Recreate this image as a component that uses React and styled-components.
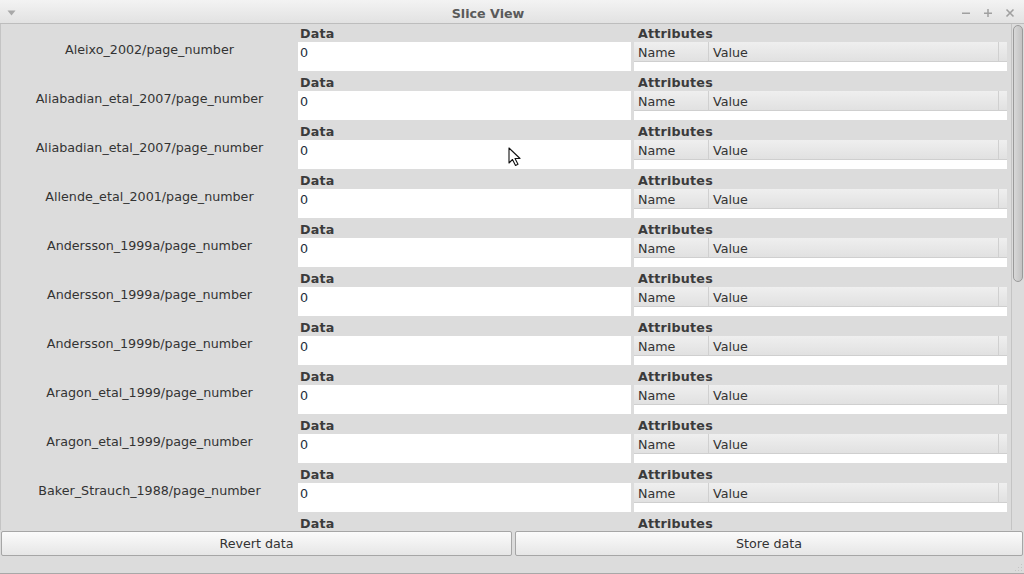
import React from "react";
import styled, { createGlobalStyle } from "styled-components";

// last entry is the row that is scrolled half out of view; its label sits below the fold
const rows = [
    "Aleixo_2002/page_number",
    "Aliabadian_etal_2007/page_number",
    "Aliabadian_etal_2007/page_number",
    "Allende_etal_2001/page_number",
    "Andersson_1999a/page_number",
    "Andersson_1999a/page_number",
    "Andersson_1999b/page_number",
    "Aragon_etal_1999/page_number",
    "Aragon_etal_1999/page_number",
    "Baker_Strauch_1988/page_number",
    "",
];

const GlobalStyle = createGlobalStyle`
    html, body {
        margin: 0;
        padding: 0;
        background: #dcdcdc;
    }
    body {
        font-family: "DejaVu Sans", "Liberation Sans", sans-serif;
        font-size: 12.7px;
        color: #333;
    }
`;

const App = () => {
    return (
        <>
            <GlobalStyle />
            <Window>
                <TitleBar>
                    <MenuArrow>
                        <svg width="9" height="6" viewBox="0 0 9 6">
                            <path d="M0.5 0.5 L8.5 0.5 L4.5 5.5 Z" fill="#a8a8a8" />
                        </svg>
                    </MenuArrow>
                    <Title>Slice View</Title>
                    <Controls>
                        <ControlButton>
                            <svg width="10" height="10" viewBox="0 0 10 10">
                                <rect x="1" y="4.5" width="8" height="1.5" fill="#a0a0a0" />
                            </svg>
                        </ControlButton>
                        <ControlButton>
                            <svg width="10" height="10" viewBox="0 0 10 10">
                                <rect x="1" y="4.5" width="8" height="1.5" fill="#a0a0a0" />
                                <rect x="4.25" y="1" width="1.5" height="8" fill="#a0a0a0" />
                            </svg>
                        </ControlButton>
                        <ControlButton>
                            <svg width="10" height="10" viewBox="0 0 10 10">
                                <path d="M1.5 1.5 L8.5 8.5 M8.5 1.5 L1.5 8.5" stroke="#a0a0a0" strokeWidth="1.6" />
                            </svg>
                        </ControlButton>
                    </Controls>
                </TitleBar>

                <Body>
                    <ScrollArea>
                        {rows.map((name, i) => (
                            <Row key={i}>
                                <RowLabel>{name}</RowLabel>
                                <DataColumn>
                                    <SectionLabel>Data</SectionLabel>
                                    <DataField>0</DataField>
                                </DataColumn>
                                <AttrColumn>
                                    <SectionLabel $indent={4}>Attributes</SectionLabel>
                                    <AttrHeader>
                                        <HeaderCell $width={75}>Name</HeaderCell>
                                        <HeaderCell $grow>Value</HeaderCell>
                                        <HeaderCell $width={8} />
                                    </AttrHeader>
                                    <AttrTable />
                                </AttrColumn>
                            </Row>
                        ))}
                    </ScrollArea>
                    <ScrollTrack>
                        <ScrollThumb />
                    </ScrollTrack>
                </Body>

                <ButtonBar>
                    <PushButton $width={511}>Revert data</PushButton>
                    <PushButton>Store data</PushButton>
                </ButtonBar>

                <StatusBar>
                    <SizeGrip>
                        <svg width="10" height="10" viewBox="0 0 10 10">
                            <g fill="#c4c4c4">
                                <rect x="8" y="2" width="1" height="1" />
                                <rect x="5" y="5" width="1" height="1" />
                                <rect x="8" y="5" width="1" height="1" />
                                <rect x="2" y="8" width="1" height="1" />
                                <rect x="5" y="8" width="1" height="1" />
                                <rect x="8" y="8" width="1" height="1" />
                            </g>
                        </svg>
                    </SizeGrip>
                </StatusBar>

                <Pointer width="14" height="20" viewBox="0 0 14 20">
                    <path
                        d="M1 1 L1 16 L4.5 12.5 L7.5 18.5 L10 17.3 L7 11.5 L12 11.5 Z"
                        fill="#fff"
                        stroke="#111"
                        strokeWidth="1.1"
                        strokeLinejoin="round"
                    />
                </Pointer>
            </Window>
        </>
    );
};

const Window = styled.div`
    position: relative;
    width: 1024px;
    height: 574px;
    display: flex;
    flex-direction: column;
    background: #dcdcdc;
    overflow: hidden;
`;

const TitleBar = styled.div`
    height: 24px;
    display: flex;
    align-items: center;
    padding-top: 3px;
    background: linear-gradient(to bottom, #f3f3f3, #e2e2e2);
    border-bottom: 1px solid #bdbdbd;
    box-sizing: border-box;
`;

const MenuArrow = styled.div`
    width: 22px;
    display: flex;
    justify-content: center;
    align-items: center;
`;

const Title = styled.div`
    flex: 1;
    text-align: center;
    font-weight: bold;
    color: #5a5a5a;
`;

const Controls = styled.div`
    width: 70px;
    display: flex;
    justify-content: flex-end;
    align-items: center;
    gap: 12px;
    padding-right: 9px;
    box-sizing: border-box;
`;

const ControlButton = styled.div`
    width: 10px;
    height: 10px;
    display: flex;
`;

const Body = styled.div`
    height: 506px;
    display: flex;
    border-left: 1px solid #c4c4c4;
    box-sizing: border-box;
`;

const ScrollArea = styled.div`
    width: 1010px;
    overflow: hidden;
    border-right: 1px solid #c4c4c4;
    padding-top: 1px;
`;

const Row = styled.div`
    height: 49px;
    display: flex;
`;

const RowLabel = styled.div`
    width: 297px;
    height: 49px;
    display: flex;
    align-items: center;
    justify-content: center;
    color: #333;
    padding-bottom: 1px;
    box-sizing: border-box;
`;

const DataColumn = styled.div`
    width: 333px;
    display: flex;
    flex-direction: column;
`;

const AttrColumn = styled.div`
    width: 373px;
    margin-left: 3px;
    display: flex;
    flex-direction: column;
`;

const SectionLabel = styled.div`
    height: 17px;
    line-height: 18px;
    font-weight: bold;
    color: #3b3b3b;
    padding-left: ${(p) => p.$indent || 2}px;
    letter-spacing: 0.2px;
`;

const DataField = styled.div`
    height: 29px;
    background: #fff;
    padding: 3px 2px 0;
    box-sizing: border-box;
    color: #1d2b3a;
    line-height: 15px;
`;

const AttrHeader = styled.div`
    height: 20px;
    display: flex;
    background: linear-gradient(to bottom, #efefef, #e1e1e1);
    border-bottom: 1px solid #cfcfcf;
    box-sizing: border-box;
`;

const HeaderCell = styled.div`
    width: ${(p) => (p.$width ? `${p.$width}px` : "auto")};
    flex: ${(p) => (p.$grow ? 1 : "none")};
    border-right: 1px solid #d0d0d0;
    padding-left: 4px;
    line-height: 21px;
    color: #333;
    box-sizing: border-box;
    &:last-child {
        border-right: none;
    }
`;

const AttrTable = styled.div`
    height: 9px;
    background: #fff;
`;

const ScrollTrack = styled.div`
    flex: 1;
    padding: 1px 1px 0 1px;
`;

const ScrollThumb = styled.div`
    height: 257px;
    border: 1px solid #9a9a9a;
    border-radius: 5px;
    background: linear-gradient(to right, #d8d8d8, #c2c2c2);
    box-sizing: border-box;
`;

const ButtonBar = styled.div`
    height: 27px;
    display: flex;
    gap: 3px;
    padding: 1px;
    box-sizing: border-box;
`;

const PushButton = styled.button`
    flex: ${(p) => (p.$width ? "none" : 1)};
    width: ${(p) => (p.$width ? `${p.$width}px` : "auto")};
    height: 25px;
    border: 1px solid #a6a6a6;
    border-radius: 2px;
    background: linear-gradient(to bottom, #fbfbfb, #e6e6e6);
    font-family: "DejaVu Sans", "Liberation Sans", sans-serif;
    font-size: 12.7px;
    color: #333;
    padding: 0;
    cursor: pointer;
`;

const StatusBar = styled.div`
    flex: 1;
    display: flex;
    justify-content: flex-end;
    align-items: flex-end;
    border-bottom: 1px solid #a8a8a8;
`;

const SizeGrip = styled.div`
    display: flex;
    padding: 0 1px 1px 0;
`;

const Pointer = styled.svg`
    position: absolute;
    left: 508px;
    top: 147px;
    pointer-events: none;
`;

export default App;
